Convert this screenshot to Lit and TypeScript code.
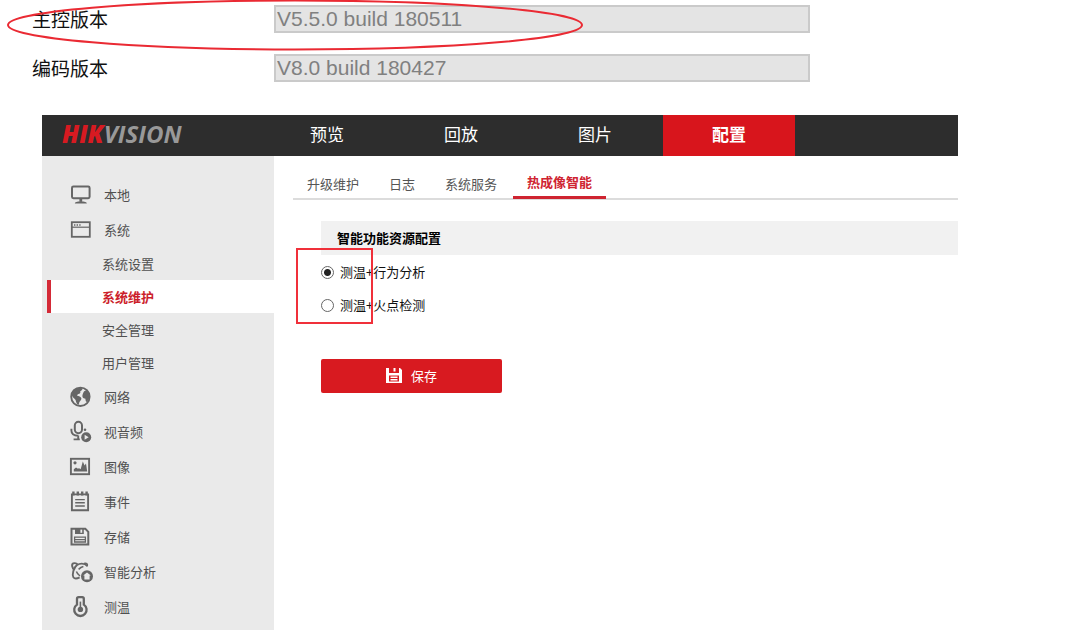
import { LitElement, html, svg, css, TemplateResult } from "lit";
import { customElement, state } from "lit/decorators.js";
import { classMap } from "lit/directives/class-map.js";

const icon = (name: string, body: TemplateResult) =>
  html`<svg class="icon icon-${name}" viewBox="0 0 24 24" width="24" height="24" aria-hidden="true">${body}</svg>`;

const icons: Record<string, TemplateResult> = {
  local: icon("local", svg`
    <rect x="3" y="3.6" width="17.6" height="11.6" rx="1.4" fill="none" stroke="currentColor" stroke-width="2"/>
    <path d="M10.4 15.5h2.8v3.4h-2.8z" fill="currentColor"/>
    <path d="M5.8 20.4c0-1.6 2-2 6-2s6 .4 6 2z" fill="currentColor"/>`),
  system: icon("system", svg`
    <rect x="2.8" y="4.2" width="18" height="14.6" fill="none" stroke="currentColor" stroke-width="1.8"/>
    <path d="M3 9.2h17.6" stroke="currentColor" stroke-width="1.2"/>
    <path d="M5 7h1.4M7.6 7h1.4M10.2 7h1.4" stroke="currentColor" stroke-width="1.3"/>`),
  network: icon("network", svg`
    <circle cx="11.4" cy="11.8" r="9.2" fill="none" stroke="currentColor" stroke-width="1.9"/>
    <path d="M2.8 10C3.6 5.600 7 2.800 11.400 2.800c1.600.2 2.400.8 1.800 2-.6 1-1.600.8-2 1.800.4 1 .2 1.800-.8 2.200-1.400.4-2.400 1-2.200 2 1.600.2 3.600.8 4.200 2.400.2 1.800-1.600 2.800-2.200 4.200-.2 1.600-.6 2.600-1.400 2.400-1.400-1.200-1.800-3-2.200-4.800-1.200-1.600-3.400-3-3.800-5z" fill="currentColor"/>
    <path d="M14.200 8c.8-2 2.600-2.800 4.400-2.200 1.600 1.800 2.400 4.200 2 6.800-.8 2.200-1.800 3.800-3.200 4.400-1-.6-.6-2.200-1.200-3.400-1.400-.2-2.800-.8-2.800-2.400 0-1.400.4-2.200.8-3.200z" fill="currentColor"/>`),
  av: icon("av", svg`
    <rect x="5.800" y="1.800" width="7.200" height="11.400" rx="3.600" fill="none" stroke="currentColor" stroke-width="2"/>
    <path d="M2.400 8.800v1.800c0 3.200 2.400 5.200 6.800 5.200M9.200 15.600v3.600M4.600 19.400h6.200" fill="none" stroke="currentColor" stroke-width="1.900"/>
    <circle cx="16" cy="9.800" r="1.300" fill="currentColor"/>
    <circle cx="17.200" cy="17.200" r="5" fill="currentColor"/>
    <path d="M15.600 14.700v5l4.100-2.500z" class="cut"/>`),
  image: icon("image", svg`
    <rect x="1.900" y="3.800" width="18.200" height="15.400" fill="none" stroke="currentColor" stroke-width="1.900"/>
    <circle cx="6" cy="7.800" r="1.600" fill="currentColor"/>
    <path d="M4.800 16.400v-2.200l2.200-1.600 2 1.200 1.200-.8.800 1.200.8-.4 2-7.200 1.800 4 1.400-2.200 1.200 8z" fill="currentColor"/>`),
  event: icon("event", svg`
    <path d="M2.900 4.400h16.200v15.800H2.900z" fill="none" stroke="currentColor" stroke-width="1.900"/>
    <path d="M4.400 1.600v4M8.800 1.600v4M13.200 1.600v4M17.600 1.600v4" stroke="currentColor" stroke-width="2.400"/>
    <path d="M6.200 9.600h9.600M6.200 12.800h9.600M6.200 16h9.600" stroke="currentColor" stroke-width="1.400"/>`),
  storage: icon("storage", svg`
    <path d="M2.500 3.800h13.800l3 3v12.800H2.500z" fill="none" stroke="currentColor" stroke-width="2"/>
    <path d="M6 4h8.800v5H6z" fill="currentColor"/>
    <path d="M11.400 4.600h1.800v3.200h-1.800z" class="cut"/>
    <path d="M5.600 12.200h10.800v4.800H5.600zM5.600 14.600h10.800" fill="none" stroke="currentColor" stroke-width="1.300"/>`),
  analysis: icon("analysis", svg`
    <path d="M8.600 4C4.800 2.200 2.600 3.200 3.200 6.200c.3 1.400 1 2.600 2 3.800" fill="none" stroke="currentColor" stroke-width="1.900"/>
    <path d="M5 9.600C6.400 5.800 9.400 3.600 12.800 3.600c2.200 0 4.200.8 5.600 2.400M8.400 4.600C4.200 8 3 14.600 4.400 17.200c1.200 1.800 3.600 1.600 6.200.2" fill="none" stroke="currentColor" stroke-width="1.900"/>
    <path d="M15 3.400c2.400-.8 4 .4 3.200 3M7.400 11.600c.6 1.800 1.800 3.200 3.600 4.400M9.600 9.400c1.400-1.400 3-2.400 4.800-2.800" fill="none" stroke="currentColor" stroke-width="1.500"/>
    <circle cx="18" cy="16.200" r="6" fill="currentColor"/>
    <path d="M18 12.400l3.800 3.200h-1.200v3.800h-5.200v-3.800h-1.200z" class="cut"/>`),
  temp: icon("temp", svg`
    <path d="M8 9.600V3.800c0-1 .6-1.600 1.600-1.600h3.600c1 0 1.600.6 1.600 1.600v5.800a6.200 6.200 0 1 1-6.800 0z" fill="none" stroke="currentColor" stroke-width="2.300"/>
    <path d="M11.400 6.600v6" stroke="currentColor" stroke-width="1.600"/>
    <circle cx="11.400" cy="14.400" r="2.700" fill="currentColor"/>`),
};

interface MenuItem {
  label: string;
  icon?: string;
}

const MENU: MenuItem[] = [
  { label: "本地", icon: "local" },
  { label: "系统", icon: "system" },
  { label: "系统设置" },
  { label: "系统维护" },
  { label: "安全管理" },
  { label: "用户管理" },
  { label: "网络", icon: "network" },
  { label: "视音频", icon: "av" },
  { label: "图像", icon: "image" },
  { label: "事件", icon: "event" },
  { label: "存储", icon: "storage" },
  { label: "智能分析", icon: "analysis" },
  { label: "测温", icon: "temp" },
];

@customElement("version-info")
class VersionInfo extends LitElement {
  static styles = css`
    :host {
      display: block;
      position: relative;
      padding: 5px 270px 33px 32px;
    }
    .rows {
      display: grid;
      gap: 21px;
    }
    .row {
      display: grid;
      grid-template-columns: 242px 1fr;
      align-items: center;
    }
    .name {
      font-size: 19px;
      line-height: 28px;
      color: #111;
    }
    .value {
      box-sizing: border-box;
      width: 100%;
      height: 28px;
      margin: 0;
      padding: 0 1px;
      border: 2px solid #cacaca;
      border-radius: 0;
      background: #e4e4e4;
      color: #808080;
      font: 21px "Liberation Sans", Arial, sans-serif;
    }
    .mark {
      position: absolute;
      left: 6px;
      top: 0;
      pointer-events: none;
    }
  `;

  render() {
    return html`
      <div class="rows">
        <div class="row">
          <label class="name" for="main">主控版本</label>
          <input class="value" id="main" readonly value="V5.5.0 build 180511" />
        </div>
        <div class="row">
          <label class="name" for="codec">编码版本</label>
          <input class="value" id="codec" readonly value="V8.0 build 180427" />
        </div>
      </div>
      <svg class="mark" width="578" height="52" viewBox="0 0 578 52" aria-hidden="true">
        <ellipse cx="289" cy="25" rx="287" ry="24.500" fill="none" stroke="#ea2a33" stroke-width="2" />
      </svg>
    `;
  }
}

@customElement("top-bar")
class TopBar extends LitElement {
  static styles = css`
    .bar {
      display: grid;
      grid-template-columns: 219px 1fr;
      height: 41px;
      background: #2d2d2d;
    }
    .logo {
      display: flex;
      align-items: center;
      padding: 0 0 4px 20px;
      font: italic 700 24px/36px "Open Sans", "Noto Sans", sans-serif;
      color: #999;
    }
    .brand {
      color: #d71a21;
      font-weight: 800;
    }
    .nav {
      display: flex;
      gap: 2px;
    }
    .link {
      box-sizing: border-box;
      width: 132px;
      height: 41px;
      color: #fff;
      font-size: 17px;
      line-height: 38px;
      text-align: center;
      text-decoration: none;
    }
    .active {
      background: #d8151c;
      font-weight: 700;
    }
  `;

  render() {
    return html`
      <header class="bar">
        <div class="logo"><span class="brand">HIK</span><span>VISION</span></div>
        <nav class="nav">
          ${["预览", "回放", "图片", "配置"].map(
            (t) => html`<a href="#" class=${classMap({ link: true, active: t === "配置" })}>${t}</a>`
          )}
        </nav>
      </header>
    `;
  }
}

@customElement("side-menu")
class SideMenu extends LitElement {
  static styles = css`
    :host {
      display: block;
      background: #eaeaea;
    }
    .menu {
      padding: 21px 0 6px;
      font-size: 13px;
    }
    .item {
      display: flex;
      align-items: center;
      gap: 11px;
      height: 35px;
      padding-left: 27px;
      color: #505050;
      text-decoration: none;
    }
    .sub {
      height: 33px;
      margin-left: 5px;
      padding-left: 55px;
    }
    .current {
      padding-left: 51px;
      border-left: 4px solid #d42a37;
      background: #fff;
      color: #cc1f2c;
      font-weight: 700;
    }
    .icon {
      flex: none;
      color: #666;
    }
    .cut {
      fill: #eaeaea;
    }
  `;

  render() {
    return html`
      <nav class="menu">
        ${MENU.map(
          (m) => html`<a
            href="#"
            class=${classMap({ item: true, sub: !m.icon, current: m.label === "系统维护" })}
            >${m.icon ? icons[m.icon] : ""}<span>${m.label}</span></a
          >`
        )}
      </nav>
    `;
  }
}

@customElement("resource-panel")
class ResourcePanel extends LitElement {
  @state() private mode = "behavior";

  static styles = css`
    :host {
      display: block;
      padding: 10px 0 0 19px;
      font-size: 13px;
    }
    .tabs {
      display: flex;
      gap: 2px;
      border-bottom: 2px solid #dcdcdc;
    }
    .tab {
      padding: 0 14px;
      height: 32px;
      line-height: 36px;
      color: #555;
      text-decoration: none;
    }
    .current {
      height: 30px;
      line-height: 32px;
      margin-bottom: -1px;
      border-bottom: 3px solid #cf2431;
      color: #cf2431;
      font-weight: 700;
    }
    .content {
      padding: 21px 0 0 28px;
    }
    .title {
      margin: 0;
      padding-left: 16px;
      background: #f1f1f1;
      color: #000;
      font-size: 13px;
      font-weight: 700;
      line-height: 34px;
    }
    .options {
      position: relative;
      margin: 0;
      padding: 0;
      border: 0;
    }
    .option {
      display: flex;
      align-items: center;
      gap: 6px;
      height: 33px;
      color: #111;
    }
    .radio {
      appearance: none;
      box-sizing: border-box;
      width: 13px;
      height: 13px;
      margin: 2px 0 0;
      border: 1px solid #666;
      border-radius: 50%;
      background: #fff;
    }
    .radio:checked {
      background: radial-gradient(circle, #222 3px, #fff 4px);
    }
    .frame {
      position: absolute;
      left: -25px;
      top: -7px;
      box-sizing: border-box;
      width: 77px;
      height: 76px;
      border: 2px solid #f0303a;
      pointer-events: none;
    }
    .save {
      display: flex;
      align-items: center;
      justify-content: center;
      gap: 9px;
      width: 181px;
      height: 34px;
      margin: 38px 0 0;
      padding: 0 0 2px;
      border: 0;
      border-radius: 2px;
      background: #d81a20;
      color: #fff;
      font: inherit;
    }
  `;

  private option(id: string, label: string) {
    return html`<label class="option">
      <input
        class="radio"
        type="radio"
        name="mode"
        .checked=${this.mode === id}
        @change=${() => (this.mode = id)}
      /><span>${label}</span></label
    >`;
  }

  render() {
    return html`
      <nav class="tabs">
        ${["升级维护", "日志", "系统服务", "热成像智能"].map(
          (t) => html`<a href="#" class=${classMap({ tab: true, current: t === "热成像智能" })}>${t}</a>`
        )}
      </nav>
      <section class="content">
        <h2 class="title">智能功能资源配置</h2>
        <fieldset class="options">
          ${this.option("behavior", "测温+行为分析")} ${this.option("fire", "测温+火点检测")}
          <div class="frame"></div>
        </fieldset>
        <button class="save" type="button">
          <svg width="16" height="16" viewBox="0 0 16 16" aria-hidden="true">
            <path
              fill="#fff"
              fill-rule="evenodd"
              d="M0 1h3v5h10V1h1l2 2v13H0zM3 8.500v6h10v-6z"
            />
            <path fill="#fff" d="M7.500 1h2v3.500h-2zM4.500 9.600h7v1.400h-7zM4.500 12h7v1.400h-7z" />
          </svg>
          <span>保存</span>
        </button>
      </section>
    `;
  }
}

@customElement("app-root")
class AppRoot extends LitElement {
  static styles = css`
    :host {
      display: block;
      min-height: 100vh;
      background: #fff;
      font-family: "Noto Sans CJK SC", sans-serif;
    }
    .device {
      margin: 0 122px 0 42px;
    }
    .body {
      display: grid;
      grid-template-columns: 232px 1fr;
    }
  `;

  render() {
    return html`
      <version-info></version-info>
      <main class="device">
        <top-bar></top-bar>
        <div class="body">
          <side-menu></side-menu>
          <resource-panel></resource-panel>
        </div>
      </main>
    `;
  }
}
